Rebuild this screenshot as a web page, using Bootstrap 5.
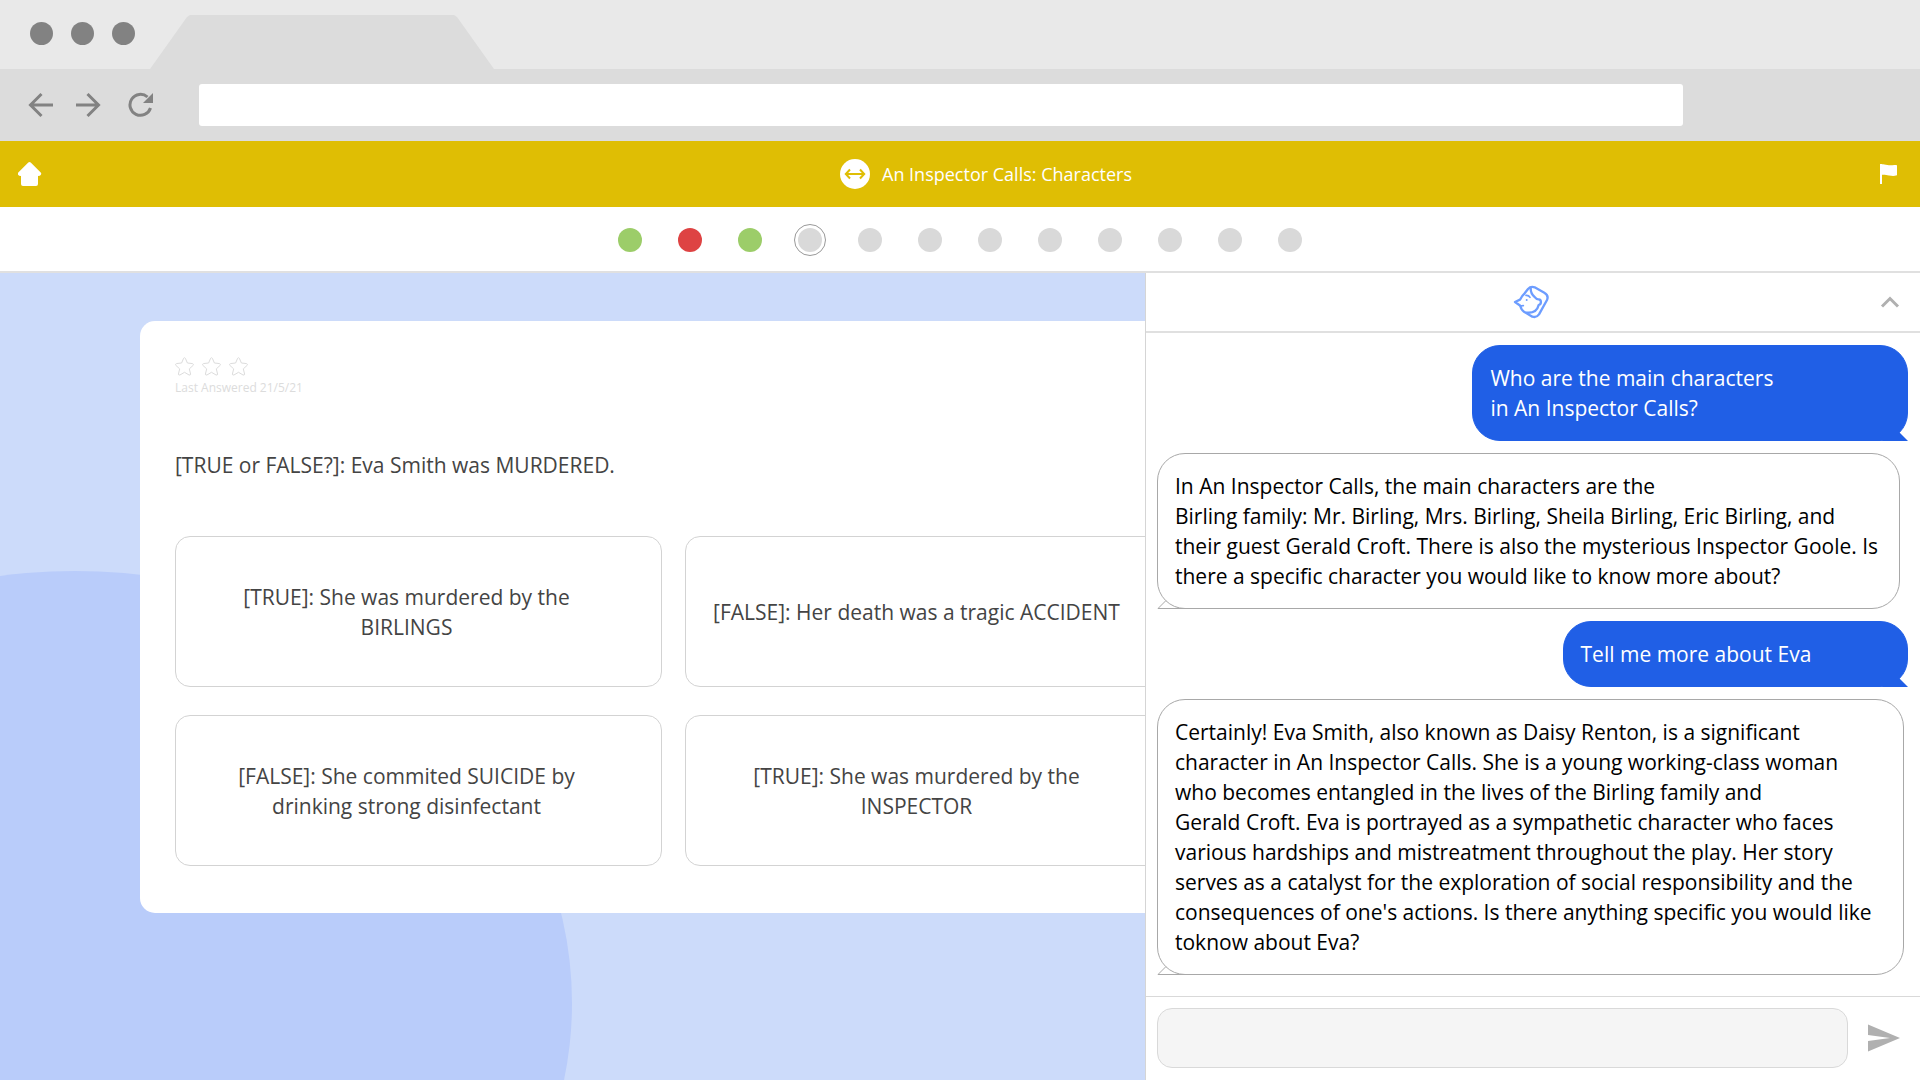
<!DOCTYPE html>
<html lang="en">
<head>
<meta charset="utf-8">
<meta name="viewport" content="width=device-width, initial-scale=1">
<title>An Inspector Calls: Characters</title>
<link href="https://cdn.jsdelivr.net/npm/bootstrap@5.3.0/dist/css/bootstrap.min.css" rel="stylesheet">
<style>
  body { font-family: "Open Sans", "Noto Sans", sans-serif; font-size: 21px; line-height: 30px; color: #444; background: #fff; }
  svg { display: block; }
  .icon-btn { border: 0; padding: 0; background: none; }
  .tab-strip { background: #e9e9e9; height: 69px; padding-left: 30px; }
  .win-dots { gap: 18px; padding-top: 22px; margin-right: 15px; }
  .win-dots span { width: 23px; height: 23px; border-radius: 50%; background: #828282; }
  .browser-tab { width: 344px; height: 54px; background: #dcdcdc; clip-path: polygon(0 100%, 37px 2px, 40px 0, 304px 0, 307px 2px, 100% 100%); }
  .tool-strip { background: #dcdcdc; height: 72px; padding: 0 237px 0 28px; }
  .tool-nav { gap: 23px; width: 171px; }
  .address { height: 42px; border: 0; border-radius: 3px; }
  .title-bar { background: #dfbe04; height: 66px; padding: 0 18px; color: #fff; font-size: 18px; }
  .title-text { gap: 12px; padding-left: 52px; }
  .title-side { width: 24px; }
  .progress-row { height: 66px; gap: 36px; padding-top: 2px; border-bottom: 2px solid #e0e0e0; }
  .step { width: 24px; height: 24px; border: 0; padding: 0; border-radius: 50%; background: #d9d9d9; }
  .step-right { background: #9ccd69; }
  .step-wrong { background: #de4343; }
  .step-now { outline: 1px solid #999; outline-offset: 3px; }
  .stage { background: #ccdbfa; min-width: 0; }
  .stage-blob { width: 994px; height: 864px; left: -422px; top: 298px; border-radius: 50%; background: #b9ccfa; }
  .quiz-card { margin: 48px -63px 0 140px; padding: 36px 36px 47px 35px; background: #fff; border-radius: 15px; }
  .stars { gap: 8px; }
  .answered { font-size: 12px; line-height: 24px; color: #dcdcdc; }
  .question { font-size: 21px; line-height: 30px; margin: 50px 0 56px; }
  .answers { display: grid; grid-template-columns: 1fr 1fr; gap: 28px 23px; }
  .answer { height: 151px; border: 1px solid #d3d3d3; border-radius: 15px; background: #fff; padding: 0 46px 0 22px; color: #444; }
  .chat { width: 775px; background: #fff; border-left: 1px solid #d5d5d5; }
  .chat-head { height: 60px; border-bottom: 2px solid #e0e0e0; padding: 0 20px 0 36px; }
  .chat-log { gap: 12px; padding: 12px 12px 20px 11px; color: #000; }
  .bubble { border-radius: 28px; padding: 17px; border: 1px solid #a8a8a8; }
  .bubble-out { background: #205fe6; border-color: #205fe6; color: #fff; }
  .bubble-out::after { content: ""; position: absolute; right: -1px; bottom: -1px; width: 27px; height: 9px; background: #205fe6; clip-path: polygon(0 100%, 18px 0, 100% 100%); }
  .bubble-tail { position: absolute; left: -1px; bottom: -1px; }
  .w-long { width: 58%; }
  .w-short { width: 46%; }
  .composer { border-top: 1px solid #d9d9d9; padding: 11px 20px 12px 11px; gap: 20px; }
  .composer input { height: 60px; border: 1px solid #d9d9d9; border-radius: 15px; background: #f5f5f5; }
</style>
</head>
<body class="d-flex flex-column min-vh-100">

<header>
  <div class="tab-strip d-flex">
    <div class="win-dots d-flex"><span></span><span></span><span></span></div>
    <div class="browser-tab align-self-end"></div>
  </div>
  <div class="tool-strip d-flex align-items-center">
    <nav class="tool-nav d-flex flex-shrink-0" aria-label="Browser">
      <button class="icon-btn" aria-label="Back"><svg width="25" height="26" viewBox="0 0 25 26" fill="none" stroke="#828282" stroke-width="3"><path d="M25 13H4M13.500 2L2.500 13l11 11"/></svg></button>
      <button class="icon-btn" aria-label="Forward"><svg width="26" height="26" viewBox="0 0 26 26" fill="none" stroke="#828282" stroke-width="3"><path d="M0 13h21M11.500 2l11 11-11 11"/></svg></button>
      <button class="icon-btn" aria-label="Reload"><svg width="28" height="26" viewBox="-1 0 28 26"><path d="M24.500 16A10.500 10.500 0 1 1 21.500 5" fill="none" stroke="#828282" stroke-width="3"/><path d="M27 1v10H17z" fill="#828282"/></svg></button>
    </nav>
    <input class="address form-control" type="text" aria-label="Address">
  </div>
</header>

<div class="title-bar d-flex align-items-center justify-content-between">
  <a class="title-side" href="#" aria-label="Home"><svg width="24" height="24" viewBox="0 0 24 24" fill="#fff"><path d="M10.300.600q1.200-1.100 2.400 0l10 10q1.100 1.200 0 2.400-.5 1-2.700 1v8q0 2-2 2H5q-2 0-2-2v-8q-2.200 0-2.700-1-1-1.200 0-2.400z"/></svg></a>
  <div class="title-text d-flex align-items-center">
    <svg width="30" height="30" viewBox="0 0 30 30"><circle cx="15" cy="15" r="15" fill="#fff"/><path d="M6 15h18M10 10.500L5.800 15l4.200 4.500M20 10.500l4.200 4.500-4.200 4.500" fill="none" stroke="#dfbe04" stroke-width="2"/></svg>
    <span>An Inspector Calls: Characters</span>
  </div>
  <button class="icon-btn title-side" aria-label="Flag"><svg width="24" height="22" viewBox="-2 0 24 22" fill="#fff"><path d="M0 1h2v20H0z"/><path d="M1 1.500c3-1 5 .5 8 .7 3 .2 5-.7 8 .1v10c-3 1-5 .7-8 .2s-5-1-8-.5z"/></svg></button>
</div>

<nav class="progress-row d-flex align-items-center justify-content-center" aria-label="Questions">
  <button class="step step-right" aria-label="Question 1"></button>
  <button class="step step-wrong" aria-label="Question 2"></button>
  <button class="step step-right" aria-label="Question 3"></button>
  <button class="step step-now" aria-label="Question 4"></button>
  <button class="step" aria-label="Question 5"></button>
  <button class="step" aria-label="Question 6"></button>
  <button class="step" aria-label="Question 7"></button>
  <button class="step" aria-label="Question 8"></button>
  <button class="step" aria-label="Question 9"></button>
  <button class="step" aria-label="Question 10"></button>
  <button class="step" aria-label="Question 11"></button>
  <button class="step" aria-label="Question 12"></button>
</nav>

<div class="d-flex flex-grow-1">
  <main class="stage flex-grow-1 position-relative overflow-hidden">
    <div class="stage-blob position-absolute"></div>
    <section class="quiz-card position-relative">
      <div class="stars d-flex">
        <svg width="19" height="19" viewBox="0 0 19 19" fill="none" stroke="#dcdcdc" stroke-linejoin="round"><path d="M8.600 1.300q.9-1.200 1.800 0l2 4.700 5.200.6q1.300.500.600 1.700l-3.900 3.600 1.300 5.200q-.1 1.300-1.500.9L9.500 15.300 4.900 18q-1.400.4-1.500-.9l1.300-5.200L.800 8.300Q.100 7.100 1.400 6.600L6.600 6z"/></svg>
        <svg width="19" height="19" viewBox="0 0 19 19" fill="none" stroke="#dcdcdc" stroke-linejoin="round"><path d="M8.600 1.300q.9-1.200 1.800 0l2 4.700 5.200.6q1.300.500.600 1.700l-3.900 3.600 1.300 5.200q-.1 1.300-1.500.9L9.500 15.300 4.900 18q-1.400.4-1.500-.9l1.300-5.200L.800 8.300Q.100 7.100 1.400 6.600L6.600 6z"/></svg>
        <svg width="19" height="19" viewBox="0 0 19 19" fill="none" stroke="#dcdcdc" stroke-linejoin="round"><path d="M8.600 1.300q.9-1.200 1.800 0l2 4.700 5.200.6q1.300.500.600 1.700l-3.900 3.600 1.300 5.200q-.1 1.300-1.500.9L9.500 15.300 4.900 18q-1.400.4-1.500-.9l1.300-5.200L.800 8.300Q.100 7.100 1.400 6.600L6.600 6z"/></svg>
      </div>
      <div class="answered">Last Answered 21/5/21</div>
      <h1 class="question">[TRUE or FALSE?]: Eva Smith was MURDERED.</h1>
      <div class="answers">
        <button class="answer">[TRUE]: She was murdered by the BIRLINGS</button>
        <button class="answer">[FALSE]: Her death was a tragic ACCIDENT</button>
        <button class="answer">[FALSE]: She commited SUICIDE by drinking strong disinfectant</button>
        <button class="answer">[TRUE]: She was murdered by the INSPECTOR</button>
      </div>
    </section>
  </main>

  <aside class="chat d-flex flex-column flex-shrink-0 position-relative">
    <div class="chat-head d-flex align-items-center justify-content-between">
      <span></span>
      <svg width="37" height="36" viewBox="103 47 111 108" fill="none" stroke="#6d9dff" stroke-width="7" stroke-linejoin="round" stroke-linecap="round"><path d="M109 101l15-7q6-12 14-19l10-13q8-9 20-5l29 16q14 8 8 22l-24 43q-8 11-20 7l-25-15q-9-6-11-18z"/><path d="M156 60q0 16 11 25c5 6 7 9 13 8 9 1 9 14 0 17-3 13-11 25-36 23"/><path d="M142 81q8-1 12 6M124 113l10-1" stroke-width="5"/><circle cx="144" cy="95" r="3" fill="#6d9dff" stroke="none"/></svg>
      <button class="icon-btn" aria-label="Collapse chat"><svg width="20" height="12" viewBox="0 0 20 12" fill="none" stroke="#b0b0b0" stroke-width="3"><path d="M2 10.500l8-8 8 8"/></svg></button>
    </div>
    <div class="chat-log d-flex flex-column flex-grow-1">
      <div class="bubble bubble-out w-long position-relative align-self-end">Who are the main characters<br>in An Inspector Calls?</div>
      <div class="bubble position-relative me-2">In An Inspector Calls, the main characters are the<br>Birling family: Mr. Birling, Mrs. Birling, Sheila Birling, Eric Birling, and<br>their guest Gerald Croft. There is also the mysterious Inspector Goole. Is<br>there a specific character you would like to know more about?
        <svg class="bubble-tail" width="28" height="9" viewBox="0 0 28 9" fill="none" stroke="#a8a8a8"><path d="M9 .5L1 8.500h27"/></svg></div>
      <div class="bubble bubble-out w-short position-relative align-self-end">Tell me more about Eva</div>
      <div class="bubble position-relative me-1">Certainly! Eva Smith, also known as Daisy Renton, is a significant<br>character in An Inspector Calls. She is a young working-class woman<br>who becomes entangled in the lives of the Birling family and<br>Gerald Croft. Eva is portrayed as a sympathetic character who faces<br>various hardships and mistreatment throughout the play. Her story<br>serves as a catalyst for the exploration of social responsibility and the<br>consequences of one's actions. Is there anything specific you would like<br>toknow about Eva?
        <svg class="bubble-tail" width="28" height="9" viewBox="0 0 28 9" fill="none" stroke="#a8a8a8"><path d="M9 .5L1 8.500h27"/></svg></div>
    </div>
    <form class="composer d-flex align-items-center">
      <input class="form-control" type="text" aria-label="Message">
      <button class="icon-btn" type="button" aria-label="Send"><svg width="32" height="28" viewBox="0 0 32 28" fill="#b0b0b0"><path d="M0 .500L32 14 0 27.500V17l22-3L0 11z"/></svg></button>
    </form>
  </aside>
</div>

<script src="https://cdn.jsdelivr.net/npm/bootstrap@5.3.0/dist/js/bootstrap.bundle.min.js"></script>
</body>
</html>
